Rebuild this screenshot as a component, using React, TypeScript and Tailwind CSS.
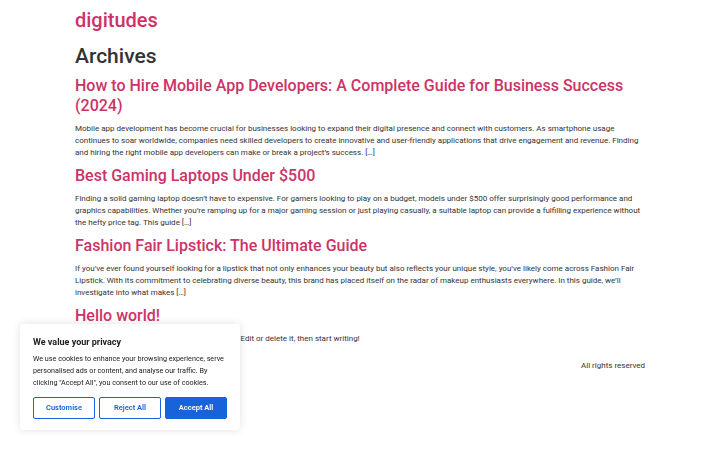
const posts = [
  {
    title: 'How to Hire Mobile App Developers: A Complete Guide for Business Success (2024)',
    excerpt:
      'Mobile app development has become crucial for businesses looking to expand their digital presence and connect with customers. As smartphone usage continues to soar worldwide, companies need skilled developers to create innovative and user-friendly applications that drive engagement and revenue. Finding and hiring the right mobile app developers can make or break a project’s success. […]',
  },
  {
    title: 'Best Gaming Laptops Under $500',
    excerpt:
      'Finding a solid gaming laptop doesn’t have to expensive. For gamers looking to play on a budget, models under $500 offer surprisingly good performance and graphics capabilities. Whether you’re ramping up for a major gaming session or just playing casually, a suitable laptop can provide a fulfilling experience without the hefty price tag. This guide […]',
  },
  {
    title: 'Fashion Fair Lipstick: The Ultimate Guide',
    excerpt:
      'If you’ve ever found yourself looking for a lipstick that not only enhances your beauty but also reflects your unique style, you’ve likely come across Fashion Fair Lipstick. With its commitment to celebrating diverse beauty, this brand has placed itself on the radar of makeup enthusiasts everywhere. In this guide, we’ll investigate into what makes […]',
  },
  {
    title: 'Hello world!',
    excerpt: 'Welcome to WordPress. This is your first post. Edit or delete it, then start writing!',
  },
];

function CookieBanner() {
  return (
    <div className="fixed left-[20px] bottom-[20px] w-[220px] bg-white rounded-[4px] shadow-[0_0_8px_rgba(0,0,0,0.12)] px-[13px] pt-[11px] pb-[11px]">
      <p className="text-[9px] font-bold text-[#212121] leading-[14px]">We value your privacy</p>
      <p className="mt-[4px] text-[7.2px] leading-[12px] text-[#212121]">
        We use cookies to enhance your browsing experience, serve personalised ads or content, and analyse our traffic. By
        clicking "Accept All", you consent to our use of cookies.
      </p>
      <div className="mt-[8px] flex gap-[4px]">
        <button className="flex-1 h-[22px] border-[1.5px] border-[#1863dc] rounded-[2px] text-[7.5px] font-semibold text-[#1863dc]">
          Customise
        </button>
        <button className="flex-1 h-[22px] border-[1.5px] border-[#1863dc] rounded-[2px] text-[7.5px] font-semibold text-[#1863dc]">
          Reject All
        </button>
        <button className="flex-1 h-[22px] border-[1.5px] border-[#1863dc] bg-[#1863dc] rounded-[2px] text-[7.5px] font-semibold text-white">
          Accept All
        </button>
      </div>
    </div>
  );
}

export default function App() {
  return (
    <div className="min-h-[450px] bg-white font-['Roboto',sans-serif] text-[#333]">
      <div className="mx-auto w-[570px]">
        {/* Header */}
        <header className="pt-[8px]">
          <p className="text-[20px] leading-[24px] font-medium text-[#cc3366]">digitudes</p>
        </header>

        <main>
          <h1 className="mt-[11px] text-[21px] leading-[26px] font-medium text-[#333]">Archives</h1>
          <div className="mt-[7px] flex flex-col gap-[7px]">
            {posts.map((post) => (
              <article key={post.title}>
                <h2 className="text-[16px] leading-[20px] font-medium text-[#cc3366]">{post.title}</h2>
                <p className="mt-[7px] text-[8px] leading-[12px] text-[#333]">{post.excerpt}</p>
              </article>
            ))}
          </div>
        </main>

        {/* Footer */}
        <footer className="mt-[15px] flex items-center justify-end text-[8px] leading-[12px] text-[#333]">
          <p>All rights reserved</p>
        </footer>
      </div>

      <CookieBanner />
    </div>
  );
}
